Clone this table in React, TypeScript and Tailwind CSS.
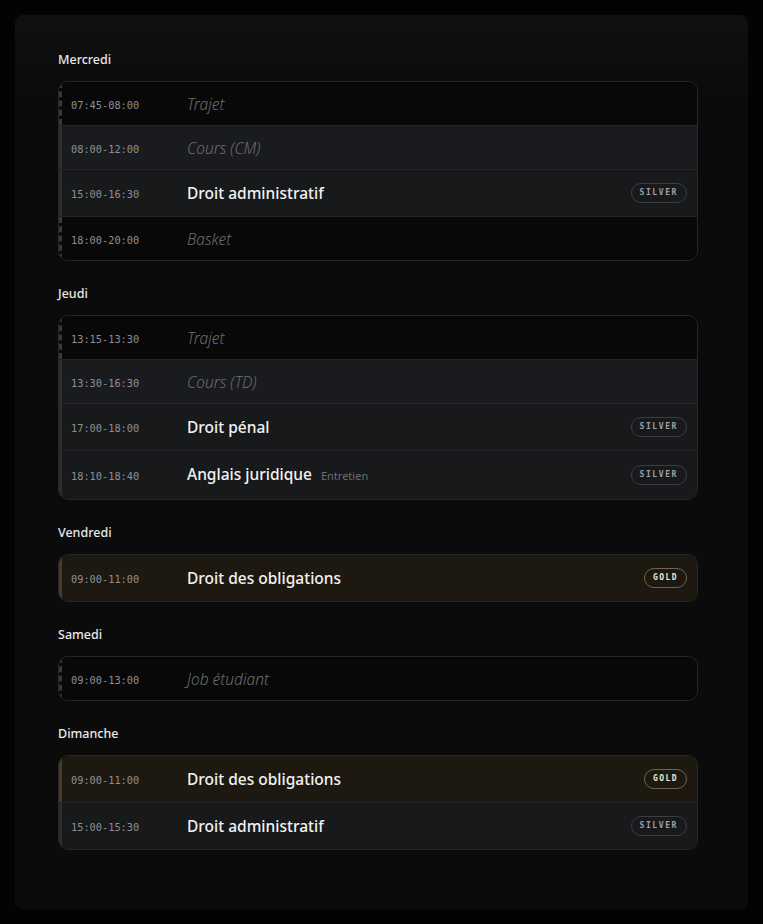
type Kind = 'free' | 'class' | 'course' | 'gold';

type Slot = {
  time: string;
  title: string;
  kind: Kind;
  badge?: 'SILVER' | 'GOLD';
  note?: string;
};

const days: { name: string; slots: Slot[] }[] = [
  {
    name: 'Mercredi',
    slots: [
      { time: '07:45-08:00', title: 'Trajet', kind: 'free' },
      { time: '08:00-12:00', title: 'Cours (CM)', kind: 'class' },
      { time: '15:00-16:30', title: 'Droit administratif', kind: 'course', badge: 'SILVER' },
      { time: '18:00-20:00', title: 'Basket', kind: 'free' },
    ],
  },
  {
    name: 'Jeudi',
    slots: [
      { time: '13:15-13:30', title: 'Trajet', kind: 'free' },
      { time: '13:30-16:30', title: 'Cours (TD)', kind: 'class' },
      { time: '17:00-18:00', title: 'Droit pénal', kind: 'course', badge: 'SILVER' },
      { time: '18:10-18:40', title: 'Anglais juridique', kind: 'course', badge: 'SILVER', note: 'Entretien' },
    ],
  },
  {
    name: 'Vendredi',
    slots: [{ time: '09:00-11:00', title: 'Droit des obligations', kind: 'gold', badge: 'GOLD' }],
  },
  {
    name: 'Samedi',
    slots: [{ time: '09:00-13:00', title: 'Job étudiant', kind: 'free' }],
  },
  {
    name: 'Dimanche',
    slots: [
      { time: '09:00-11:00', title: 'Droit des obligations', kind: 'gold', badge: 'GOLD' },
      { time: '15:00-15:30', title: 'Droit administratif', kind: 'course', badge: 'SILVER' },
    ],
  },
];

// row background + left marker (dashed for free time)
const rowBg: Record<Kind, string> = {
  free: 'bg-[#080808]',
  class: 'bg-[#1a1b1e]',
  course: 'bg-[#17191b]',
  gold: 'bg-[#1d1910]',
};

const marker: Record<Kind, string> = {
  free: 'border-dashed border-[#36383c]',
  class: 'border-solid border-[#2c2e33]',
  course: 'border-solid border-[#2c2e33]',
  gold: 'border-solid border-[#4a3c22]',
};

const Badge = ({ label }: { label: 'SILVER' | 'GOLD' }) =>
  label === 'GOLD' ? (
    <span className="flex h-[20px] items-center rounded-full border border-[#6d6453] px-[8px] font-['DejaVu_Sans_Mono',monospace] text-[8px] font-bold tracking-[0.18em] text-[#ece4cf]">
      GOLD
    </span>
  ) : (
    <span className="flex h-[20px] items-center rounded-full border border-[#3c3e42] px-[8px] font-['DejaVu_Sans_Mono',monospace] text-[8px] font-bold tracking-[0.2em] text-[#9da1a6]">
      SILVER
    </span>
  );

const Row = ({ slot }: { slot: Slot }) => {
  const free = slot.kind === 'free' || slot.kind === 'class';
  return (
    <div className={`flex border-b border-[#232428] last:border-b-0 ${rowBg[slot.kind]}`}>
      <div className={`w-0 shrink-0 self-stretch border-l-[3px] ${marker[slot.kind]}`} />
      <div className={`flex min-h-[43px] flex-1 items-center pr-[10px] pl-[9px] ${slot.badge ? 'py-[13px]' : ''}`}>
        <span className="w-[116px] shrink-0 pt-[2px] font-['DejaVu_Sans_Mono',monospace] text-[10.3px] leading-[16px] text-[#8d8f93]">
          {slot.time}
        </span>
        {free ? (
          <span className="text-[15.5px] leading-[20px] font-light text-[#6b6d71] italic">{slot.title}</span>
        ) : (
          <span className="flex items-baseline gap-[9px]">
            <span className="text-[15.5px] leading-[20px] font-medium text-[#f2f2f2]">{slot.title}</span>
            {slot.note && <span className="text-[11px] leading-[20px] text-[#6b6d70]">{slot.note}</span>}
          </span>
        )}
        <span className="ml-auto">{slot.badge && <Badge label={slot.badge} />}</span>
      </div>
    </div>
  );
};

export default function App() {
  return (
    <div className="min-h-[924px] bg-[#030303] p-[15px] font-['Noto_Sans',sans-serif]">
      <div className="rounded-lg bg-[linear-gradient(180deg,#101010_0px,#0b0b0b_80px,#0b0b0b_100%)] px-[43px] pt-[36px] pb-[59px]">
        <div className="flex flex-col gap-[24px]">
          {days.map((day) => (
            <section key={day.name} className="flex flex-col gap-[12px]">
              <h2 className="text-[12.5px] leading-[18px] font-medium text-[#e8e8e8]">{day.name}</h2>
              <div className="mr-[7px] overflow-hidden rounded-[10px] border border-[#25262a]">
                {day.slots.map((slot) => (
                  <Row key={slot.time + slot.title} slot={slot} />
                ))}
              </div>
            </section>
          ))}
        </div>
      </div>
    </div>
  );
}
